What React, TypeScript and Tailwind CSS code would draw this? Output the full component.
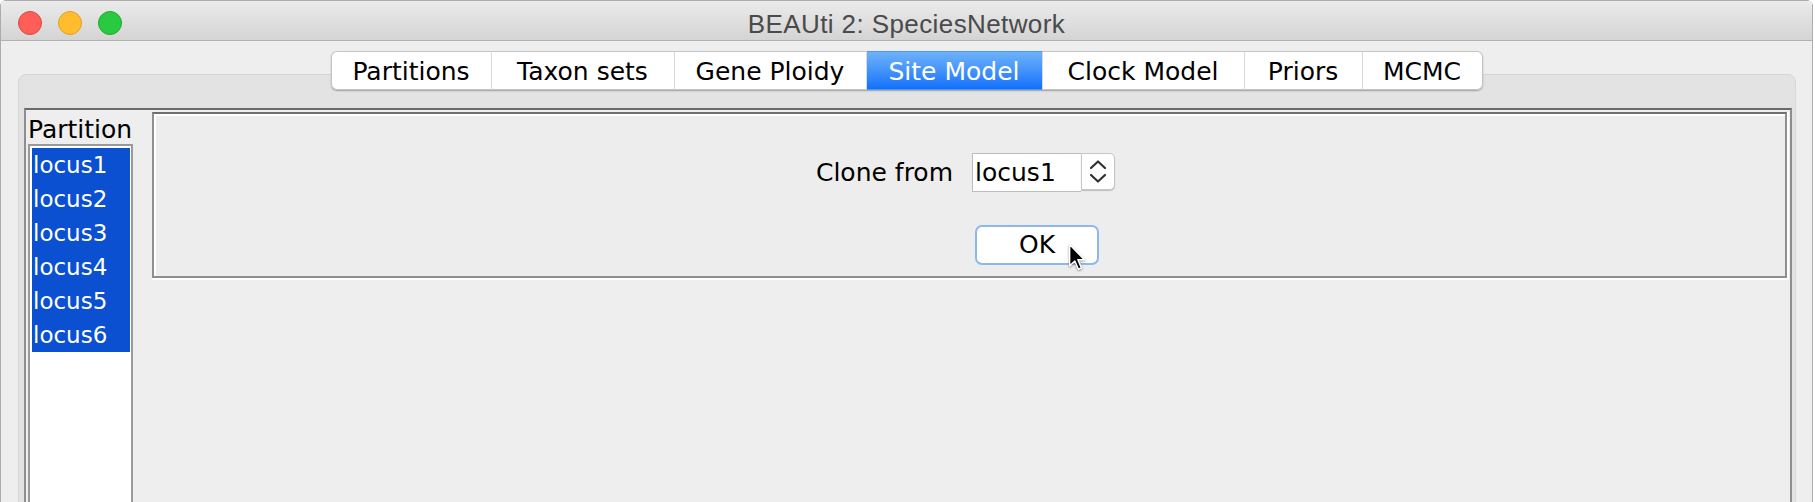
import React from "react";

const tabs = [
  { label: "Partitions", w: "w-[161px]" },
  { label: "Taxon sets", w: "w-[183px]" },
  { label: "Gene Ploidy", w: "w-[192px]" },
  { label: "Site Model", w: "w-[176px]", active: true },
  { label: "Clock Model", w: "w-[202px]" },
  { label: "Priors", w: "w-[118px]" },
  { label: "MCMC", w: "w-[120px]" },
];

const partitions = ["locus1", "locus2", "locus3", "locus4", "locus5", "locus6"];

function TitleBar() {
  return (
    <div className="grid h-[40px] grid-cols-[1fr_auto_1fr] items-center border-b border-[#b2b2b2] bg-linear-to-b from-[#ebebeb] to-[#d4d4d4]">
      <div className="flex gap-[16px] pl-[17px]">
        <span className="h-[24px] w-[24px] rounded-full border border-[#e1453f] bg-[#ff5f57]" />
        <span className="h-[24px] w-[24px] rounded-full border border-[#dfa024] bg-[#ffbd2e]" />
        <span className="h-[24px] w-[24px] rounded-full border border-[#1cac2b] bg-[#29c941]" />
      </div>
      <div className="pt-[4px] font-['Liberation_Sans',sans-serif] text-[26px] tracking-[0.4px] text-[#4a4a4a]">
        BEAUti 2: SpeciesNetwork
      </div>
      <div />
    </div>
  );
}

function TabStrip() {
  return (
    <div className="relative z-10 mt-[10px] flex justify-center">
      <div className="flex h-[39px] rounded-[6px] shadow-[0_1px_1.5px_rgba(0,0,0,0.3)]">
        {tabs.map((t, i) => (
          <div
            key={t.label}
            className={`${t.w} flex items-center justify-center whitespace-nowrap border-y border-[#c4c4c4] pt-[2px] text-[25px] ${
              i === 0 ? "rounded-l-[6px] border-l" : ""
            } ${i === tabs.length - 1 ? "rounded-r-[6px] border-r" : "border-r border-r-[#d9d9d9]"} ${
              t.active
                ? "border-y-[#4f9af5] bg-linear-to-b from-[#6db2f9] to-[#0f70fb] text-white"
                : "bg-white text-black"
            }`}
          >
            {t.label}
          </div>
        ))}
      </div>
    </div>
  );
}

function PartitionList() {
  return (
    <div className="flex w-[107px] flex-col pl-[2px] pt-[6px]">
      <div className="h-[28px] whitespace-nowrap text-[25px] leading-[28px] text-black">Partition</div>
      <div className="flex-1 border-2 border-b-0 border-[#9a9a9a] bg-white p-[2px] pr-[1px]">
        <div className="bg-[#0a50d0]">
          {partitions.map((p) => (
            <div key={p} className="h-[34px] pl-[1px] text-[23px] leading-[34px] text-white">
              {p}
            </div>
          ))}
        </div>
      </div>
    </div>
  );
}

function Chevrons() {
  return (
    <svg width="18" height="26" viewBox="0 0 18 26" fill="none">
      <path d="M2 9 L9 2.5 L16 9" stroke="#303030" strokeWidth="2.2" strokeLinecap="round" strokeLinejoin="round" />
      <path d="M2 16 L9 22.5 L16 16" stroke="#303030" strokeWidth="2.2" strokeLinecap="round" strokeLinejoin="round" />
    </svg>
  );
}

function Cursor() {
  return (
    <svg
      width="18"
      height="28"
      viewBox="0 0 12 19"
      className="absolute left-[91px] top-[16px] drop-shadow-[0_1px_1px_rgba(0,0,0,0.4)]"
    >
      <path
        d="M1 1 L1 15.5 L4.5 12.2 L7 17.8 L9 16.9 L6.6 11.4 L11 11.4 Z"
        fill="#000"
        stroke="#fff"
        strokeWidth="1"
        strokeLinejoin="round"
      />
    </svg>
  );
}

function SiteModelPanel() {
  return (
    <div className="ml-[19px] mt-[2px] w-[1637px] self-start border-b-2 border-r-2 border-white">
      <div className="border-2 border-[#8f8f8f] border-t-[#6f6f6f]">
        <div className="flex justify-center border-l-2 border-t-2 border-white bg-[#ededed] pb-[11px] pr-[10px] pt-[37px]">
          <div className="grid grid-cols-[auto_auto] items-center gap-x-[19px] gap-y-[33px]">
            <div className="text-[25px] text-black">Clone from</div>
            <div className="flex h-[39px] items-start">
              <div className="flex h-[39px] w-[109px] items-center border border-r-0 border-[#bdbdbd] bg-white pl-[2px] text-[25px] text-black">
                locus1
              </div>
              <div className="flex h-[37px] w-[34px] items-center justify-center rounded-r-[5px] border border-[#c6c6c6] bg-white shadow-[0_1px_1px_rgba(0,0,0,0.2)]">
                <Chevrons />
              </div>
            </div>
            <div />
            <div className="relative ml-[3px] flex h-[40px] w-[124px] items-center justify-center rounded-[7px] border-2 border-[#8cb8ef] bg-white text-[25px] text-black">
              OK
              <Cursor />
            </div>
          </div>
        </div>
      </div>
    </div>
  );
}

export default function App() {
  return (
    <div className="h-[502px] w-[1815px] overflow-hidden bg-white font-['DejaVu_Sans',sans-serif]">
      <div className="flex h-[540px] w-[1813px] flex-col rounded-t-[6px] border border-[#acacac] bg-[#eeeeee]">
        <TitleBar />
        <TabStrip />
        <div className="ml-[17px] mt-[-16px] flex w-[1778px] flex-1 flex-col rounded-t-[8px] border border-[#d6d6d6] bg-[#e3e3e3] pl-[5px] pr-[3px] pt-[33px]">
          <div className="flex flex-1 border-x-2 border-t-2 border-x-[#8e8e8e] border-t-[#6a6a6a] bg-[#eeeeee]">
            <PartitionList />
            <SiteModelPanel />
          </div>
        </div>
      </div>
    </div>
  );
}
